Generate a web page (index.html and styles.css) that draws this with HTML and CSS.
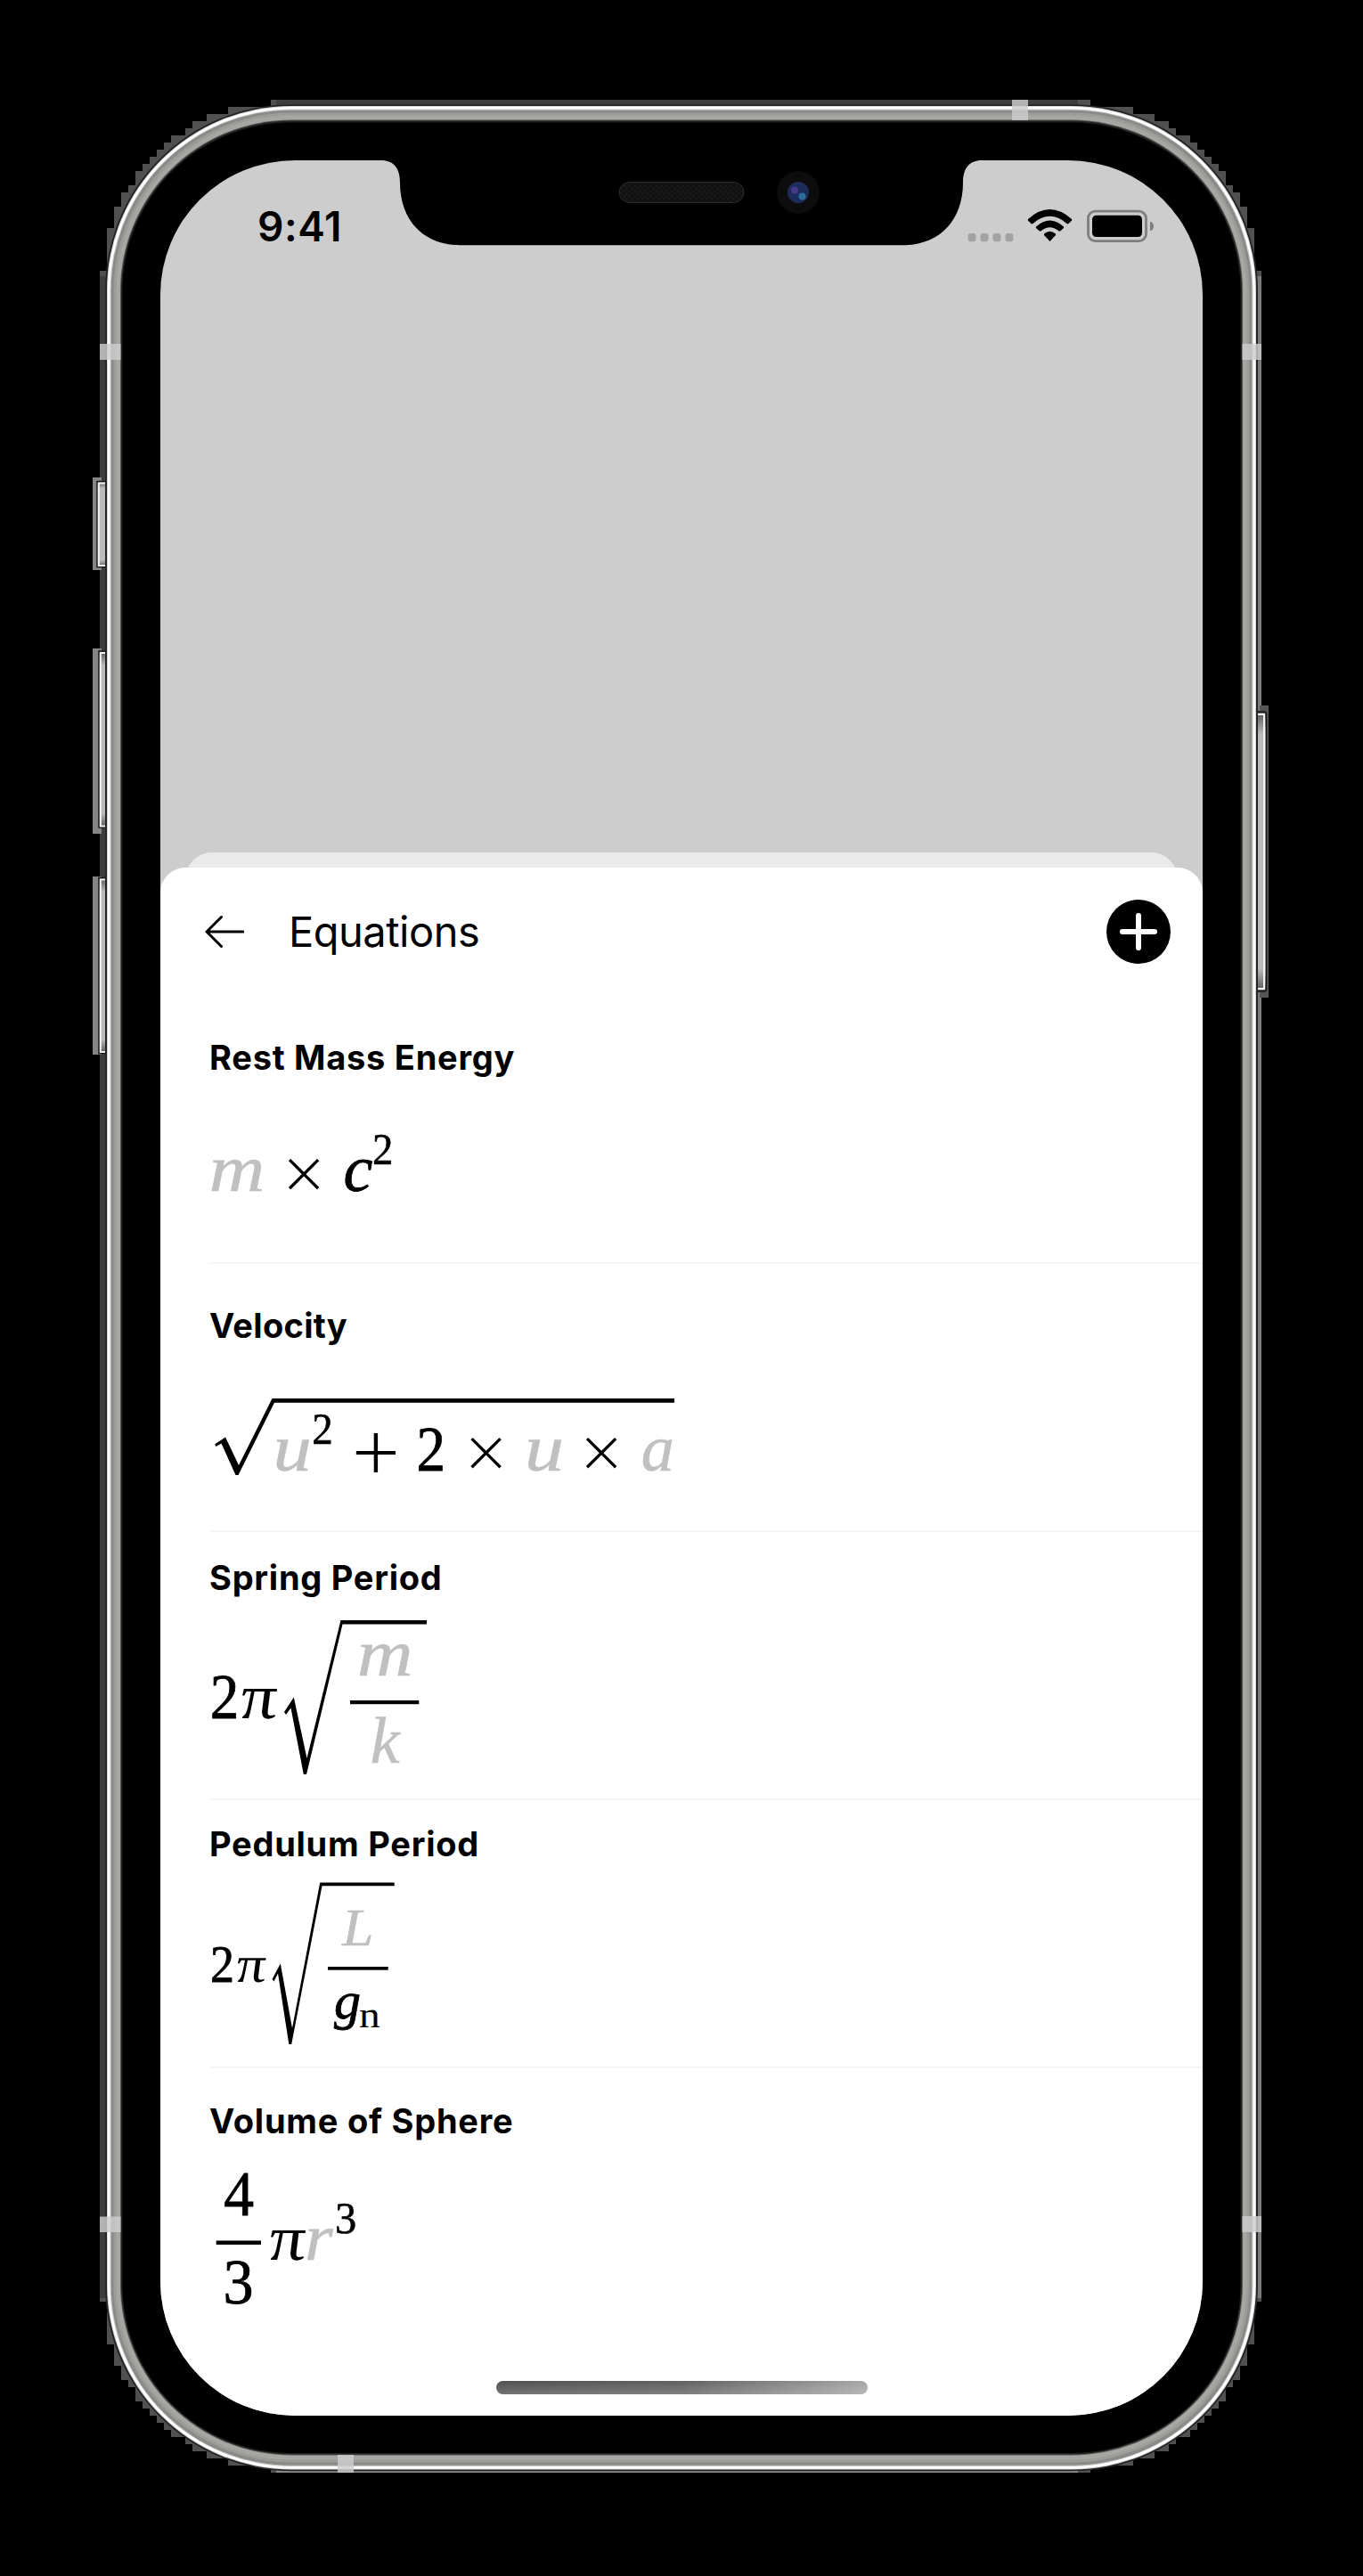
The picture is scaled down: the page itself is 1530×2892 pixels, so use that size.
FILE: index.html
```html
<!DOCTYPE html>
<html lang="en">
<head>
<meta charset="utf-8">
<title>Equations</title>
<link rel="stylesheet" href="styles.css">
</head>
<body>
<div class="device">
  <svg class="frame" viewBox="0 0 1530 2892" aria-hidden="true">
    <defs>
      <linearGradient id="steel" x1="0" x2="0" y1="0" y2="1">
        <stop offset="0" stop-color="#555"/><stop offset=".08" stop-color="#bbb"/><stop offset=".92" stop-color="#bbb"/><stop offset="1" stop-color="#555"/>
      </linearGradient>
      <path id="corner" d="M112 330V304H120V256H128V232H136V216H144V208H152V192H160V184H168V176H176V168H184V160H192V152H208V144H216V136H232V128H256V120H304V112H330V330Z"/>
    </defs>
    <!-- outer shadow -->
    <g fill="#505050" shape-rendering="crispEdges">
      <use href="#corner"/>
      <use href="#corner" transform="translate(1528 0) scale(-1 1)"/>
      <use href="#corner" transform="translate(0 2888) scale(1 -1)"/>
      <use href="#corner" transform="translate(1528 2888) scale(-1 -1)"/>
      <rect x="112" y="310" width="40" height="2270" fill="#3d3d3d"/>
      <rect x="1376" y="310" width="40" height="2270" fill="#7b7b7b"/>
      <rect x="310" y="112" width="900" height="40" fill="#3d3d3d"/>
      <rect x="310" y="2736" width="900" height="40" fill="#8a8a8a"/>
    </g>
    <!-- side buttons -->
    <g fill="#858585">
      <rect x="104" y="536" width="10" height="104"/>
      <rect x="104" y="728" width="10" height="208"/>
      <rect x="104" y="984" width="10" height="200"/>
      <rect x="1414" y="792" width="10" height="328" fill="#555"/>
    </g>
    <g fill="url(#steel)" stroke="#151515" stroke-width="1.5">
      <rect x="109" y="540.5" width="12" height="96"/>
      <rect x="111" y="731" width="10" height="198"/>
      <rect x="111" y="985.500" width="10" height="197"/>
      <rect x="1408" y="799" width="13.500" height="314" rx="3"/>
    </g>
    <g fill="none" stroke="#f2f2f2" stroke-width="2">
      <path d="M120 542.500H110.800V635H120M120 733H112.800V927.500H120M120 987.500H112.800V1181H120M1411 802H1419V1110H1411"/>
    </g>
    <!-- steel band, from the outer edge inwards -->
    <rect x="118" y="117.200" width="1294" height="2657" rx="209" fill="#242424"/>
    <rect x="120" y="119" width="1290" height="2653.400" rx="207" fill="#d8d8d4"/>
    <rect x="121" y="120" width="1288" height="2651.400" rx="206" fill="#fff"/>
    <rect x="123.500" y="122.500" width="1283" height="2646.400" rx="204" fill="#c8c8c8"/>
    <rect x="124.700" y="123.700" width="1280.600" height="2644" rx="202" fill="#8a8a88"/>
    <rect x="127.500" y="126.500" width="1275" height="2638" rx="200" fill="#9c9c99"/>
    <rect x="130.500" y="129.500" width="1269" height="2632" rx="197" fill="#a6a6a3"/>
    <rect x="135" y="134.500" width="1260" height="2622" rx="192" fill="#555"/>
    <rect x="136" y="135.500" width="1258" height="2620" rx="191" fill="#222"/>
    <rect x="137.500" y="137.500" width="1255" height="2616.500" rx="189" fill="#000"/>
    <!-- antenna bands -->
    <g fill="#cdcdcd" fill-opacity=".82">
      <rect x="112" y="386" width="23.500" height="18"/>
      <rect x="1394.500" y="386" width="21.500" height="18"/>
      <rect x="112" y="2488.500" width="23.500" height="17.500"/>
      <rect x="1394.500" y="2488" width="21.500" height="18"/>
      <rect x="1136" y="112" width="18" height="23"/>
      <rect x="379" y="2756" width="18" height="20"/>
    </g>
  </svg>

  <main class="screen">
    <svg class="notch" viewBox="0 0 1170 96" aria-hidden="true">
      <defs>
        <pattern id="mesh" width="6" height="6" patternUnits="userSpaceOnUse"><circle cx="1.500" cy="1.500" r="1.300" fill="#1b1b1b"/><circle cx="4.500" cy="4.500" r="1.300" fill="#1b1b1b"/></pattern>
      </defs>
      <path d="M248 0C262 0 269 9 269 25C269 67 295 95.300 337 95.300H833C875 95.300 901 67 901 25C901 9 908 0 922 0Z"/>
      <rect x="515" y="24.500" width="140" height="23" rx="11.500" fill="#111"/>
      <rect x="515" y="24.500" width="140" height="23" rx="11.500" fill="url(#mesh)" stroke="#2b2b2b"/>
      <circle cx="716" cy="36" r="24" fill="#0c0c0c"/>
      <circle cx="716" cy="36" r="12" fill="#1c2c5c"/>
      <circle cx="712" cy="33.500" r="4" fill="#453a86"/>
      <circle cx="720.500" cy="40.500" r="4" fill="#2c6c98"/>
    </svg>

    <header class="status">
      <span class="time">9:41</span>
      <svg class="status-icons" viewBox="0 0 212 40" aria-hidden="true">
        <g fill="#a3a3a3"><rect x="0.500" y="28" width="9" height="9.300" rx="3"/><rect x="14.500" y="28" width="9" height="9.300" rx="3"/><rect x="28.500" y="28" width="9" height="9.300" rx="3"/><rect x="42.500" y="28" width="9" height="9.300" rx="3"/></g>
        <path d="M68.300 11.800Q92.500-9.600 116.700 11.800Q117.700 12.900 116.700 14L113.500 17Q112.500 17.800 111.500 16.900Q92.500 .8 73.500 16.900Q72.500 17.800 71.500 17L68.300 14Q67.300 12.900 68.300 11.800Z"/>
        <path d="M77.300 20.200Q92.500 6.800 107.700 20.200Q108.700 21.200 107.700 22.200L104.400 25.200Q103.400 26 102.400 25.200Q92.500 17.200 82.600 25.200Q81.600 26 80.600 25.200L77.300 22.200Q76.300 21.200 77.300 20.200Z"/>
        <path d="M86.300 28.300Q92.500 23.300 98.700 28.300Q99.600 29.200 98.700 30.200L92.500 37L86.300 30.200Q85.400 29.200 86.300 28.300Z"/>
        <rect x="135.500" y="3.200" width="65" height="33.500" rx="8" fill="none" stroke="#7e7e7e" stroke-width="2.800"/>
        <rect x="140" y="7.800" width="56" height="24.200" rx="4.500"/>
        <path d="M205 14.500Q209 16 209 20T205 25.500Z" fill="#7e7e7e"/>
      </svg>
    </header>

    <div class="sheet-back"></div>
    <section class="sheet">
      <header class="bar">
        <svg class="back" viewBox="0 0 44 38" aria-hidden="true"><path d="M18.500 2.500L2 19L18.500 35.500M2.500 19H43"/></svg>
        <h1 class="title">Equations</h1>
        <svg class="add" viewBox="0 0 72 72" aria-hidden="true"><circle cx="36" cy="36" r="36"/><path d="M36 18V54M18 36H54"/></svg>
      </header>

      <ul class="list">
        <li class="row">
          <h2 class="name">Rest Mass Energy</h2>
          <svg class="math" viewBox="235 1210 600 190">
            <text class="i v" transform="translate(234.800 1337) scale(1.170 1)">m</text>
            <text class="op" x="341" y="1340.500">×</text>
            <text class="i b" transform="translate(385.400 1337)">c</text>
            <text class="sup" transform="translate(418 1307) scale(.935 1)">2</text>
          </svg>
        </li>
        <li class="row">
          <h2 class="name tight">Velocity</h2>
          <svg class="math" viewBox="235 1511 600 190">
            <path d="M241 1621.500L253 1613.500L268 1645L305.500 1570H757V1574.700H308L267.500 1656H264.500L248.500 1620.500L242.500 1624Z"/>
            <text class="i v" transform="translate(306.500 1650.700) scale(1.170 1)">u</text>
            <text class="sup" transform="translate(350.300 1620.500) scale(.940 1)">2</text>
            <text class="op plus" x="422" y="1659.500">+</text>
            <text class="n b" transform="translate(467.600 1650.500) scale(.918 1)">2</text>
            <text class="op" x="545.500" y="1653.500">×</text>
            <text class="i v" transform="translate(589 1650.700) scale(1.190 1)">u</text>
            <text class="op" x="675" y="1653.500">×</text>
            <text class="i v" transform="translate(719.700 1650.700)">a</text>
          </svg>
        </li>
        <li class="row row-a">
          <h2 class="name">Spring Period</h2>
          <svg class="math" viewBox="235 1794 600 210">
            <text class="n b" transform="translate(235.700 1929) scale(.918 1)">2</text>
            <text class="i" transform="translate(271.500 1929) skewX(4) scale(1.080 .970)">π</text>
            <path d="M319 1922L329.800 1905.500L344.500 1974L382.500 1819H479V1823.600H384.500L344 1992H340.800L326.500 1917.500L321 1925Z"/>
            <text class="i v" transform="translate(401 1881) scale(1.170 1)">m</text>
            <rect x="393" y="1909" width="77.300" height="4.200"/>
            <text class="i v" transform="translate(415.700 1978.600)">k</text>
          </svg>
        </li>
        <li class="row row-b">
          <h2 class="name">Pedulum Period</h2>
          <svg class="math" viewBox="235 2093 600 215">
            <text class="n s b" transform="translate(236.100 2225) scale(.900 1)">2</text>
            <text class="i s" transform="translate(266.500 2225) skewX(4) scale(1.080 .970)">π</text>
            <path d="M305.500 2222L314.800 2204.500L328 2277L359.200 2113.500H442.700V2117.300H361.500L327.200 2295H324.300L312 2215.500L307.500 2224.500Z"/>
            <text class="i s v" transform="translate(384.200 2183.600) scale(1.050 1)">L</text>
            <rect x="368" y="2208" width="67.700" height="3.700"/>
            <text class="i s b" transform="translate(375 2266)">g</text>
            <text class="sub" transform="translate(403 2275.700) scale(1.130 1)">n</text>
          </svg>
        </li>
        <li class="row row-c">
          <h2 class="name">Volume of Sphere</h2>
          <svg class="math" viewBox="235 2404 600 200">
            <text class="n b" transform="translate(251.200 2487.300) scale(.953 1)">4</text>
            <rect x="242.700" y="2515.500" width="50.300" height="4.500"/>
            <text class="n b" transform="translate(250.500 2585.500) scale(.960 1)">3</text>
            <text class="i" transform="translate(303.500 2536.700) skewX(4) scale(1.080 .970)">π</text>
            <text class="i v" transform="translate(342 2536.700) scale(1.100 1)">r</text>
            <text class="sup" transform="translate(376 2507) scale(.970 1)">3</text>
          </svg>
        </li>
      </ul>
      <div class="home"></div>
    </section>
  </main>
</div>
</body>
</html>
```
FILE: styles.css
```css
* { box-sizing: border-box; }
body { margin: 0; background: #000; color: #000; font-family: Inter, "Liberation Sans", sans-serif; }
.device { position: relative; width: 1530px; height: 2892px; padding: 180px; overflow: hidden; }
.frame { position: absolute; inset: 0; width: 1530px; height: 2892px; }
.screen {
  position: relative; width: 1170px; height: 2532px; background: #cdcdcd;
  display: flex; flex-direction: column; border-radius: 151px; overflow: hidden;
}
.notch { position: absolute; top: 0; left: 0; width: 1170px; height: 96px; }
.status { height: 777px; padding: 46px 52px 0 109px; display: flex; justify-content: space-between; align-items: flex-start; }
.time { font-size: 46px; line-height: 56px; font-weight: 560; letter-spacing: 0.6px; }
.status-icons { width: 212px; height: 40px; margin-top: 8px; }
.sheet-back { height: 47px; margin: 0 28px -30px; background: #eaeaea; border-radius: 30px 30px 0 0; }
.sheet { position: relative; flex: 1; background: #fff; border-radius: 28px 28px 0 0; display: flex; flex-direction: column; }
.bar { height: 144px; padding: 0 36px 0 50px; display: flex; align-items: center; }
.back { width: 44px; height: 38px; fill: none; stroke: #000; stroke-width: 3; stroke-linecap: round; }
.title { margin: 0 auto 0 50px; font-size: 47px; font-weight: 400; letter-spacing: -0.5px; line-height: 60px; }
.add { width: 72px; height: 72px; }
.add path { stroke: #fff; stroke-width: 6; stroke-linecap: round; }
.list { list-style: none; margin: 0; padding: 0 0 0 55px; }
.row { height: 301px; padding-top: 46px; border-bottom: 2px solid #f5f5f5; overflow: hidden; }
.row-a { padding-top: 28px; }
.row-b { padding-top: 26px; }
.row-c { padding-top: 36px; border-bottom: 0; }
.name { margin: 0; font-size: 38px; line-height: 46px; font-weight: 700; letter-spacing: 0.75px; white-space: nowrap; }
.tight { letter-spacing: 0.3px; }
.math { display: block; width: 600px; }
.math text { font-family: "Liberation Serif", serif; font-size: 71px; }
.math .i { font-style: italic; font-size: 74px; }
.math .s { font-size: 60px; }
.math .sup { font-size: 50px; stroke: #000; stroke-width: .6; }
.math .sub { font-size: 42px; }
.math .b { stroke: #000; stroke-width: .8; }
.math .v { fill: #c0c0c0; stroke: #c0c0c0; stroke-width: .6; }
.math .op { font-family: Inter, sans-serif; font-weight: 200; font-size: 80px; text-anchor: middle; }
.math .plus { font-size: 102px; }
.home { position: absolute; left: 377px; bottom: 24px; width: 417px; height: 15px; border-radius: 8px; background: linear-gradient(to bottom, rgba(255,255,255,0), rgba(255,255,255,.2)), linear-gradient(to right, #505050, #606060 50%, #a6a6a6); }
```
